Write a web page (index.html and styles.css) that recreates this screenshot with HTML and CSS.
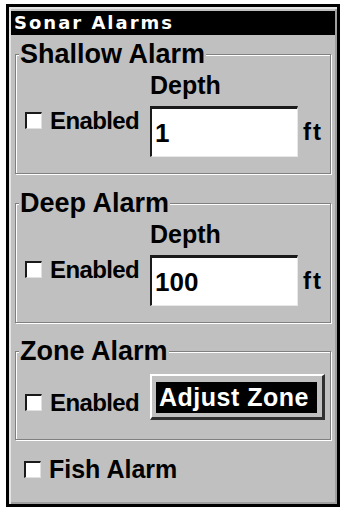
FILE: index.html
```html
<!DOCTYPE html>
<html>
<head>
<meta charset="utf-8">
<link rel="stylesheet" href="styles.css">
</head>
<body>
<div class="panel">
  <div class="title">Sonar Alarms</div>

  <fieldset class="group">
    <legend>Shallow Alarm</legend>
    <div class="cap">Depth</div>
    <div class="row">
      <label class="check"><span class="box"></span><span class="lbl">Enabled</span></label>
      <div class="field">1</div>
      <span class="unit">ft</span>
    </div>
  </fieldset>

  <fieldset class="group deep">
    <legend>Deep Alarm</legend>
    <div class="cap">Depth</div>
    <div class="row">
      <label class="check"><span class="box"></span><span class="lbl">Enabled</span></label>
      <div class="field">100</div>
      <span class="unit">ft</span>
    </div>
  </fieldset>

  <fieldset class="group zone">
    <legend>Zone Alarm</legend>
    <div class="row zrow">
      <label class="check zcheck"><span class="box"></span><span class="lbl">Enabled</span></label>
      <button class="btn"><span class="btn-face">Adjust Zone</span></button>
    </div>
  </fieldset>

  <label class="check fish"><span class="box"></span><span class="lbl fish-lbl">Fish Alarm</span></label>
</div>
</body>
</html>
```

FILE: styles.css
```css
html, body {
  margin: 0;
  padding: 0;
  background: #ffffff;
}

body {
  font-family: "Liberation Sans", Arial, sans-serif;
  font-weight: bold;
  color: #000;
}

.panel {
  box-sizing: border-box;
  width: 334px;
  height: 503px;
  margin: 4px 0 0 6px;
  border: 3px solid #000;
  background: #c0c0c0;
  box-shadow: inset 2px 2px 0 #e4e4e4, inset -2px -2px 0 #a0a0a0;
  overflow: hidden;
}

.title {
  margin: 4px 2px 0 2px;
  height: 24px;
  background: #000;
  color: #fff;
  font-family: "DejaVu Sans", sans-serif;
  font-weight: bold;
  font-size: 18px;
  line-height: 24px;
  letter-spacing: 2px;
  padding-left: 3px;
}

.group {
  box-sizing: border-box;
  width: 316px;
  margin: 6px 0 0 6px;
  padding: 0 0 16px 0;
  border: 1px solid #808080;
  box-shadow: inset 1px 1px 0 #fff, 1px 1px 0 #fff;
  min-inline-size: 0;
}

.group.deep {
  margin-top: 16px;
}

.group.zone {
  margin-top: 15px;
  padding-bottom: 19px;
}

.group legend {
  margin-left: 3px;
  padding: 0 1px;
  font-size: 27px;
  line-height: 26px;
  background: #c0c0c0;
}

.cap {
  margin: 6px 0 0 134px;
  font-size: 25px;
  line-height: 25px;
}

.row {
  display: grid;
  grid-template-columns: 134px 148px auto;
  align-items: start;
  margin-top: 8px;
}

.zrow {
  margin-top: 10px;
}

.check {
  display: flex;
  align-items: flex-start;
  margin: 3px 0 0 9px;
  font-size: 24px;
  line-height: 24px;
}

.zcheck {
  margin-top: 17px;
}

.box {
  box-sizing: border-box;
  width: 17px;
  height: 17px;
  margin: 3px 8px 0 0;
  background: #fff;
  border-top: 2px solid #1a1a1a;
  border-left: 2px solid #1a1a1a;
  border-right: 1px solid #e0e0e0;
  border-bottom: 1px solid #e0e0e0;
  flex: none;
}

.lbl {
  letter-spacing: -0.6px;
}

.field {
  box-sizing: border-box;
  height: 51px;
  background: #fff;
  border-top: 3px solid #1a1a1a;
  border-left: 2px solid #1a1a1a;
  border-right: 1px solid #e8e8e8;
  border-bottom: 1px solid #e8e8e8;
  padding: 11px 0 0 3px;
  font-size: 26px;
  line-height: 26px;
}

.unit {
  margin: 14px 0 0 5px;
  font-size: 24px;
  line-height: 24px;
  letter-spacing: 2px;
}

.btn {
  box-sizing: border-box;
  width: 175px;
  height: 46px;
  margin: 0;
  padding: 6px 5px 4px 4px;
  background: #c0c0c0;
  border-style: solid;
  border-width: 2px 3px 3px 2px;
  border-color: #fff #303030 #303030 #fff;
  font: inherit;
  text-align: left;
  display: block;
}

.btn-face {
  display: block;
  height: 31px;
  background: #000;
  color: #fff;
  font-family: "Liberation Sans", Arial, sans-serif;
  font-weight: bold;
  font-size: 25px;
  line-height: 31px;
  letter-spacing: 0.5px;
  padding-left: 3px;
}

.fish {
  margin: 17px 0 0 15px;
  font-size: 25px;
  line-height: 25px;
}

.fish .box {
  margin-top: 4px;
}

.fish-lbl {
  letter-spacing: 0;
}
```
